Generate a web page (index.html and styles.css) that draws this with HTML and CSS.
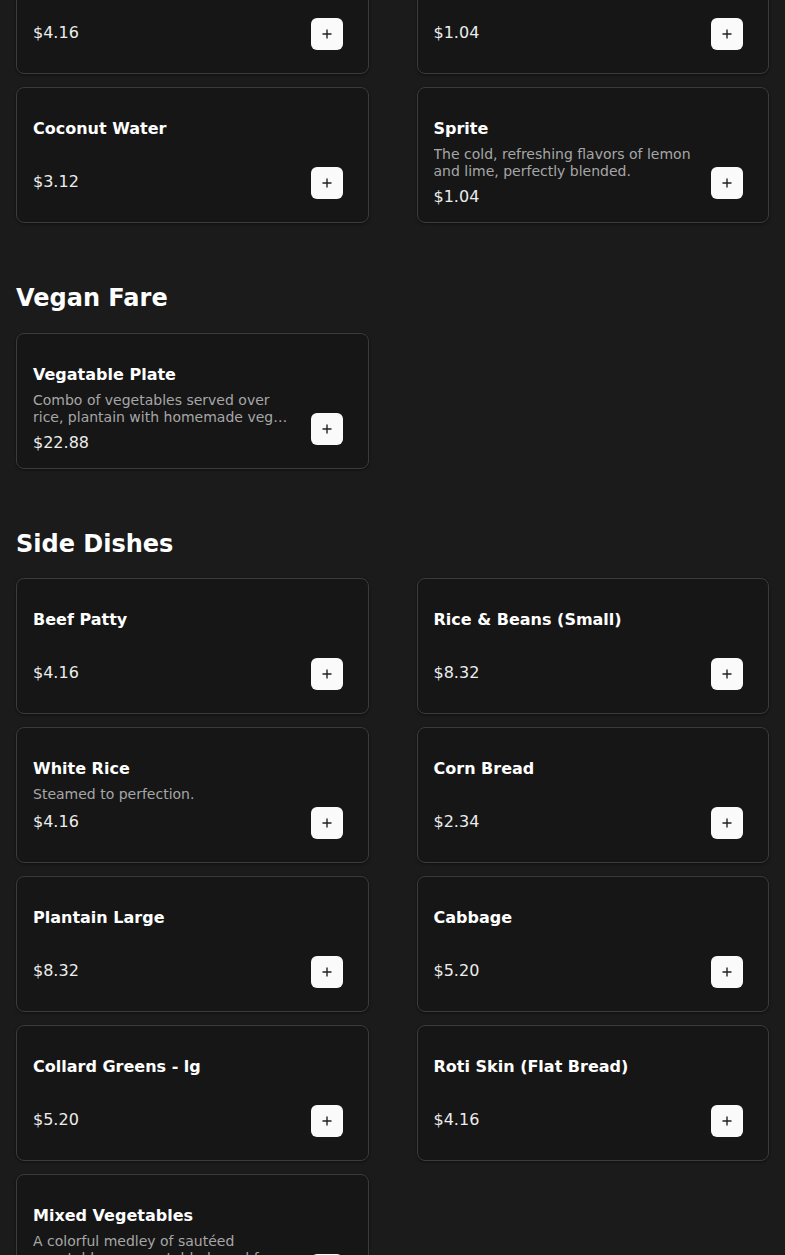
FILE: index.html
```html
<!DOCTYPE html>
<html lang="en">
<head>
<meta charset="utf-8">
<title>Menu</title>
<link rel="stylesheet" href="styles.css">
</head>
<body>
<main class="menu">
  <section class="section first">
    <div class="grid">
      <div class="card">
        <div class="info"><div class="name">&nbsp;</div><div class="desc"></div><div class="price">$4.16</div></div>
        <button class="add" aria-label="Add"><svg viewBox="0 0 12 12" width="12" height="12"><path d="M6 1.5v9M1.5 6h9" stroke="#222" stroke-width="1.4" fill="none"/></svg></button>
      </div>
      <div class="card">
        <div class="info"><div class="name">&nbsp;</div><div class="desc"></div><div class="price">$1.04</div></div>
        <button class="add" aria-label="Add"><svg viewBox="0 0 12 12" width="12" height="12"><path d="M6 1.5v9M1.5 6h9" stroke="#222" stroke-width="1.4" fill="none"/></svg></button>
      </div>
      <div class="card">
        <div class="info"><div class="name">Coconut Water</div><div class="desc"></div><div class="price">$3.12</div></div>
        <button class="add" aria-label="Add"><svg viewBox="0 0 12 12" width="12" height="12"><path d="M6 1.5v9M1.5 6h9" stroke="#222" stroke-width="1.4" fill="none"/></svg></button>
      </div>
      <div class="card">
        <div class="info"><div class="name">Sprite</div><div class="desc">The cold, refreshing flavors of lemon and lime, perfectly blended.</div><div class="price">$1.04</div></div>
        <button class="add" aria-label="Add"><svg viewBox="0 0 12 12" width="12" height="12"><path d="M6 1.5v9M1.5 6h9" stroke="#222" stroke-width="1.4" fill="none"/></svg></button>
      </div>
    </div>
  </section>

  <section class="section">
    <h2 class="heading">Vegan Fare</h2>
    <div class="grid">
      <div class="card">
        <div class="info"><div class="name">Vegatable Plate</div><div class="desc">Combo of vegetables served over rice, plantain with homemade vegan gravy and fresh greens.</div><div class="price">$22.88</div></div>
        <button class="add" aria-label="Add"><svg viewBox="0 0 12 12" width="12" height="12"><path d="M6 1.5v9M1.5 6h9" stroke="#222" stroke-width="1.4" fill="none"/></svg></button>
      </div>
    </div>
  </section>

  <section class="section">
    <h2 class="heading">Side Dishes</h2>
    <div class="grid">
      <div class="card">
        <div class="info"><div class="name">Beef Patty</div><div class="desc"></div><div class="price">$4.16</div></div>
        <button class="add" aria-label="Add"><svg viewBox="0 0 12 12" width="12" height="12"><path d="M6 1.5v9M1.5 6h9" stroke="#222" stroke-width="1.4" fill="none"/></svg></button>
      </div>
      <div class="card">
        <div class="info"><div class="name">Rice &amp; Beans (Small)</div><div class="desc"></div><div class="price">$8.32</div></div>
        <button class="add" aria-label="Add"><svg viewBox="0 0 12 12" width="12" height="12"><path d="M6 1.5v9M1.5 6h9" stroke="#222" stroke-width="1.4" fill="none"/></svg></button>
      </div>
      <div class="card">
        <div class="info"><div class="name">White Rice</div><div class="desc">Steamed to perfection.</div><div class="price">$4.16</div></div>
        <button class="add" aria-label="Add"><svg viewBox="0 0 12 12" width="12" height="12"><path d="M6 1.5v9M1.5 6h9" stroke="#222" stroke-width="1.4" fill="none"/></svg></button>
      </div>
      <div class="card">
        <div class="info"><div class="name">Corn Bread</div><div class="desc"></div><div class="price">$2.34</div></div>
        <button class="add" aria-label="Add"><svg viewBox="0 0 12 12" width="12" height="12"><path d="M6 1.5v9M1.5 6h9" stroke="#222" stroke-width="1.4" fill="none"/></svg></button>
      </div>
      <div class="card">
        <div class="info"><div class="name">Plantain Large</div><div class="desc"></div><div class="price">$8.32</div></div>
        <button class="add" aria-label="Add"><svg viewBox="0 0 12 12" width="12" height="12"><path d="M6 1.5v9M1.5 6h9" stroke="#222" stroke-width="1.4" fill="none"/></svg></button>
      </div>
      <div class="card">
        <div class="info"><div class="name">Cabbage</div><div class="desc"></div><div class="price">$5.20</div></div>
        <button class="add" aria-label="Add"><svg viewBox="0 0 12 12" width="12" height="12"><path d="M6 1.5v9M1.5 6h9" stroke="#222" stroke-width="1.4" fill="none"/></svg></button>
      </div>
      <div class="card">
        <div class="info"><div class="name">Collard Greens - lg</div><div class="desc"></div><div class="price">$5.20</div></div>
        <button class="add" aria-label="Add"><svg viewBox="0 0 12 12" width="12" height="12"><path d="M6 1.5v9M1.5 6h9" stroke="#222" stroke-width="1.4" fill="none"/></svg></button>
      </div>
      <div class="card">
        <div class="info"><div class="name">Roti Skin (Flat Bread)</div><div class="desc"></div><div class="price">$4.16</div></div>
        <button class="add" aria-label="Add"><svg viewBox="0 0 12 12" width="12" height="12"><path d="M6 1.5v9M1.5 6h9" stroke="#222" stroke-width="1.4" fill="none"/></svg></button>
      </div>
      <div class="card">
        <div class="info"><div class="name">Mixed Vegetables</div><div class="desc">A colorful medley of sautéed vegetables, a vegetable-based food dish.</div><div class="price">$5.20</div></div>
        <button class="add" aria-label="Add"><svg viewBox="0 0 12 12" width="12" height="12"><path d="M6 1.5v9M1.5 6h9" stroke="#222" stroke-width="1.4" fill="none"/></svg></button>
      </div>
    </div>
  </section>
</main>
</body>
</html>
```

FILE: styles.css
```css
html {
  background: #1b1b1b;
}
body {
  margin: 0;
  padding: 0 16px;
  background: #1b1b1b;
  color: #fff;
  font-family: "DejaVu Sans", "Noto Sans", sans-serif;
}
.menu {
  margin-top: -62px;
}
.section + .section {
  margin-top: 59px;
}
.heading {
  margin: 0 0 18.5px;
  font-size: 24px;
  line-height: 32px;
  font-weight: 700;
  color: #fff;
}
.grid {
  display: grid;
  grid-template-columns: 1fr 1fr;
  column-gap: 48px;
  row-gap: 13px;
}
.card {
  box-sizing: border-box;
  height: 136px;
  padding: 29px 25px 23px 16px;
  display: flex;
  gap: 16px;
  background: #161616;
  border: 1px solid #3b3b3b;
  border-radius: 8px;
  box-shadow: 0 1px 3px rgba(0, 0, 0, 0.45);
}
.info {
  flex: 1;
  min-width: 0;
  align-self: flex-start;
}
.name {
  font-size: 16px;
  line-height: 24px;
  font-weight: 700;
  color: #fff;
}
.desc {
  margin-top: 5px;
  min-height: 19px;
  font-size: 14px;
  line-height: 17px;
  color: #a6a6a6;
  display: -webkit-box;
  -webkit-box-orient: vertical;
  -webkit-line-clamp: 2;
  overflow: hidden;
}
.price {
  margin-top: 5px;
  font-size: 16px;
  line-height: 24px;
  color: #ececec;
}
.add {
  align-self: flex-end;
  flex: none;
  width: 32px;
  height: 32px;
  padding: 0;
  border: none;
  border-radius: 6px;
  background: #fafafa;
  display: flex;
  align-items: center;
  justify-content: center;
  cursor: pointer;
}
.add svg {
  display: block;
}
```
